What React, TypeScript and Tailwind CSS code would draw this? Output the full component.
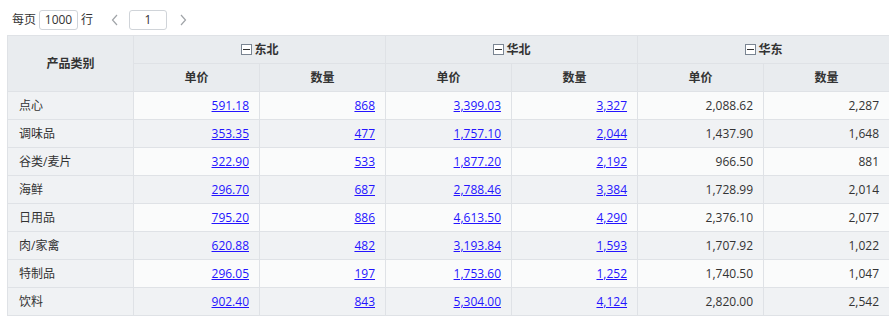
import React from 'react'

const rows = [
  { name: '点心', v: ['591.18', '868', '3,399.03', '3,327', '2,088.62', '2,287'] },
  { name: '调味品', v: ['353.35', '477', '1,757.10', '2,044', '1,437.90', '1,648'] },
  { name: '谷类/麦片', v: ['322.90', '533', '1,877.20', '2,192', '966.50', '881'] },
  { name: '海鲜', v: ['296.70', '687', '2,788.46', '3,384', '1,728.99', '2,014'] },
  { name: '日用品', v: ['795.20', '886', '4,613.50', '4,290', '2,376.10', '2,077'] },
  { name: '肉/家禽', v: ['620.88', '482', '3,193.84', '1,593', '1,707.92', '1,022'] },
  { name: '特制品', v: ['296.05', '197', '1,753.60', '1,252', '1,740.50', '1,047'] },
  { name: '饮料', v: ['902.40', '843', '5,304.00', '4,124', '2,820.00', '2,542'] },
]

const regions = ['东北', '华北', '华东']

const Minus = () => (
  <span className="flex w-[11px] h-[11px] border border-[#7a8592] bg-white items-center justify-center mr-[3px]">
    <span className="block w-[7px] h-[1px] bg-[#333]" />
  </span>
)

const Chevron = ({ dir }: { dir: 'l' | 'r' }) => (
  <svg width="8" height="12" viewBox="0 0 8 12" fill="none" stroke="#a0a4a8" strokeWidth="1.2">
    {dir === 'l' ? <path d="M6 1 L1.5 6 L6 11" /> : <path d="M2 1 L6.5 6 L2 11" />}
  </svg>
)

const App = () => {
  const font = { fontFamily: '"Segoe UI", "Open Sans", "Noto Sans CJK SC", sans-serif' }
  return (
    <div className="w-[889px] h-[336px] bg-white text-[12px] text-[#333] overflow-hidden" style={font}>
      <div className="flex items-center h-[35px] pl-[12px] pt-[4px]">
        <span>每页</span>
        <div className="ml-[3px] w-[39px] h-[20px] border border-[#d0d4d9] rounded-[3px] flex items-center justify-center text-[12px]">1000</div>
        <span className="ml-[3px]">行</span>
        <span className="ml-[18px] flex"><Chevron dir="l" /></span>
        <div className="ml-[10px] w-[38px] h-[20px] border border-[#d0d4d9] rounded-[3px] flex items-center justify-center">1</div>
        <span className="ml-[12px] flex"><Chevron dir="r" /></span>
      </div>
      <table className="ml-[7px] w-[882px] border-collapse table-fixed">
        <colgroup>
          {Array.from({ length: 7 }).map((_, i) => (
            <col key={i} className="w-[126px]" />
          ))}
        </colgroup>
        <thead>
          <tr className="h-[28px] bg-[#e9ecef]">
            <th rowSpan={2} className="border border-[#dfe2e6] font-bold">产品类别</th>
            {regions.map((r) => (
              <th key={r} colSpan={2} className="border border-[#dfe2e6] font-bold">
                <div className="flex items-center justify-center">
                  <Minus />
                  {r}
                </div>
              </th>
            ))}
          </tr>
          <tr className="h-[28px] bg-[#e9ecef]">
            {regions.map((r) => (
              <React.Fragment key={r}>
                <th className="border border-[#dfe2e6] font-bold">单价</th>
                <th className="border border-[#dfe2e6] font-bold">数量</th>
              </React.Fragment>
            ))}
          </tr>
        </thead>
        <tbody>
          {rows.map((row, i) => (
            <tr key={row.name} className={`h-[28px] ${i % 2 === 0 ? 'bg-[#fafbfb]' : 'bg-[#f0f2f4]'}`}>
              <td className="border border-[#dfe2e6] bg-[#f0f2f4] pl-[11px]">{row.name}</td>
              {row.v.map((v, j) => (
                <td key={j} className="border border-[#dfe2e6] text-right pr-[10px]">
                  {j < 4 ? <a className="text-[#2414ff] underline">{v}</a> : v}
                </td>
              ))}
            </tr>
          ))}
        </tbody>
      </table>
    </div>
  )
}

export default App
